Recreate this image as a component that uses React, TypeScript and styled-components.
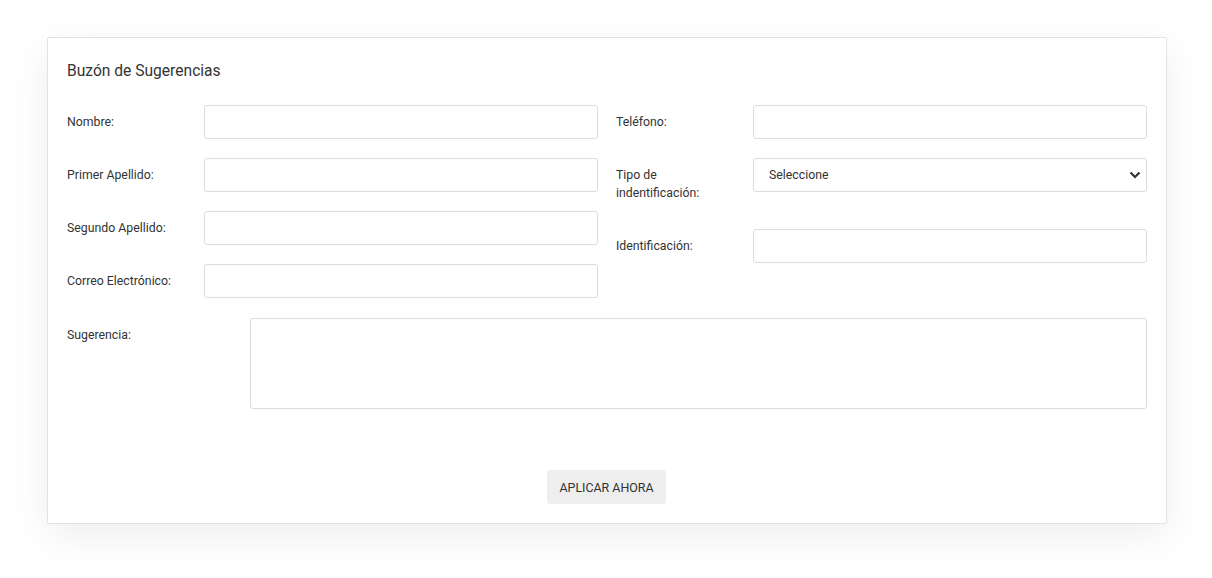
import React from 'react';
import styled, { createGlobalStyle } from 'styled-components';

const GlobalStyle = createGlobalStyle`
  body {
    margin: 0;
    background: #ffffff;
    font-family: Roboto, "Liberation Sans", Arial, sans-serif;
    color: #333333;
  }
`;

const leftFields = ['Nombre:', 'Primer Apellido:', 'Segundo Apellido:', 'Correo Electrónico:'];

function App() {
  return (
    <Page>
      <GlobalStyle />
      <Card>
        <Title>Buzón de Sugerencias</Title>
        <Columns>
          <Column>
            {leftFields.map((label) => (
              <Field key={label}>
                <Label>{label}</Label>
                <Input type='text' />
              </Field>
            ))}
          </Column>
          <Column>
            <Field>
              <Label>Teléfono:</Label>
              <Input type='text' />
            </Field>
            <Field>
              <Label>Tipo de<br />indentificación:</Label>
              <SelectWrap>
                <Select defaultValue=''>
                  <option value=''>Seleccione</option>
                </Select>
                <Chevron width='12' height='8' viewBox='0 0 12 8'>
                  <path d='M1.5 1.5 L6 6 L10.5 1.5' fill='none' stroke='#333' strokeWidth='2.2' />
                </Chevron>
              </SelectWrap>
            </Field>
            <Field>
              <Label>Identificación:</Label>
              <Input type='text' />
            </Field>
          </Column>
        </Columns>
        <WideField>
          <Label>Sugerencia:</Label>
          <TextArea />
        </WideField>
        <Actions>
          <Button>APLICAR AHORA</Button>
        </Actions>
      </Card>
    </Page>
  );
}

export default App;

const Page = styled.div`
  padding: 37px 45px 55px 47px;
`;

const Card = styled.div`
  box-sizing: border-box;
  width: 1120px;
  background: #ffffff;
  border: 1px solid #e2e2e2;
  border-radius: 2px;
  padding: 20px 19px 19px 19px;
  box-shadow: 0 12px 40px rgba(0, 0, 0, 0.07);
`;

const Title = styled.h3`
  margin: 0 0 21px 0;
  font-size: 15.6px;
  font-weight: 400;
  line-height: 26px;
  color: #333333;
`;

const Columns = styled.div`
  display: grid;
  grid-template-columns: 531px 531px;
  column-gap: 18px;
`;

const Column = styled.div`
  display: flex;
  flex-direction: column;
  gap: 19px;
`;

const Field = styled.div`
  display: grid;
  grid-template-columns: 137px 1fr;
  align-items: start;
`;

const WideField = styled(Field)`
  grid-template-columns: 183px 1fr;
  margin-top: 20px;
`;

const Label = styled.label`
  font-size: 12.3px;
  line-height: 18px;
  padding: 8px 0;
  color: #333333;
`;

const Input = styled.input`
  box-sizing: border-box;
  width: 100%;
  height: 34px;
  border: 1px solid #dcdcdc;
  border-radius: 3px;
  background: #ffffff;
  outline: none;
  padding: 0 12px;
  font-family: inherit;
`;

const SelectWrap = styled.div`
  position: relative;
`;

const Select = styled.select`
  box-sizing: border-box;
  width: 100%;
  height: 34px;
  border: 1px solid #dcdcdc;
  border-radius: 3px;
  background: #ffffff;
  appearance: none;
  padding: 0 30px 0 15px;
  font-family: inherit;
  font-size: 12.3px;
  color: #333333;
  outline: none;
`;

const Chevron = styled.svg`
  position: absolute;
  right: 6px;
  top: 13px;
  pointer-events: none;
`;

const TextArea = styled.textarea`
  box-sizing: border-box;
  width: 100%;
  height: 91px;
  border: 1px solid #dcdcdc;
  border-radius: 3px;
  resize: none;
  outline: none;
  font-family: inherit;
`;

const Actions = styled.div`
  display: flex;
  justify-content: center;
  margin-top: 61px;
  padding-right: 1px;
`;

const Button = styled.button`
  height: 34px;
  width: 119px;
  border: none;
  border-radius: 3px;
  background: #eeeeee;
  color: #333333;
  font-family: inherit;
  font-size: 12.4px;
  cursor: pointer;
`;
